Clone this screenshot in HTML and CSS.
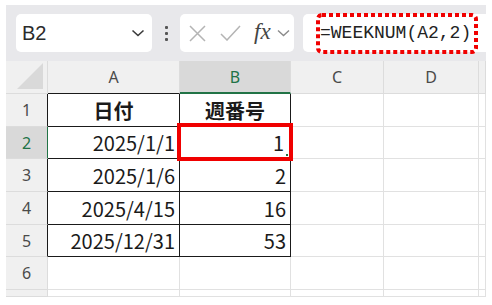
FILE: index.html
```html
<!DOCTYPE html>
<html lang="ja">
<head>
<meta charset="utf-8">
<link rel="stylesheet" href="styles.css">
</head>
<body>
<div class="frame">
  <div class="toolbar">
    <div class="namebox">
      <span class="ref">B2</span>
      <svg class="chev" width="14" height="8" viewBox="0 0 14 8"><path d="M1.5 1.5 L7 6.5 L12.5 1.5" fill="none" stroke="#3a3a3a" stroke-width="1.6"/></svg>
    </div>
    <div class="dots"><i></i><i></i><i></i></div>
    <div class="fbtns">
      <svg class="ic-x" width="17" height="17" viewBox="0 0 17 17"><path d="M1 1 L16 16 M16 1 L1 16" stroke="#b4b4b4" stroke-width="1.5" fill="none"/></svg>
      <svg class="ic-ok" width="21" height="16" viewBox="0 0 21 16"><path d="M1 9 L7 15 L20 1" stroke="#b4b4b4" stroke-width="1.5" fill="none"/></svg>
      <span class="fx">fx</span>
      <svg class="chev2" width="13" height="8" viewBox="0 0 13 8"><path d="M1 1.5 L6.5 6.5 L12 1.5" fill="none" stroke="#8a8a8a" stroke-width="1.4"/></svg>
    </div>
    <div class="formula">
      <span class="ftext">=WEEKNUM(A2,2)</span>
      <svg class="dotted" width="162" height="41" viewBox="0 0 162 41"><rect x="2" y="2" width="158" height="37" rx="4" fill="none" stroke="#f00000" stroke-width="4" stroke-dasharray="4 3"/></svg>
    </div>
  </div>
  <div class="sheet">
    <div class="c h corner"><svg width="27" height="27" viewBox="0 0 27 27"><path d="M26 0 L26 26 L0 26 Z" fill="#d9d9d9"/></svg></div>
    <div class="c h hA">A</div>
    <div class="c h hsel">B</div>
    <div class="c h">C</div>
    <div class="c h">D</div>
    <div class="c h"></div>

    <div class="c r rt">1</div>
    <div class="c t b">日付</div>
    <div class="c t b">週番号</div>
    <div class="c"></div>
    <div class="c"></div>
    <div class="c"></div>

    <div class="c r rsel">2</div>
    <div class="c t n">2025/1/1</div>
    <div class="c t n b2">1<span class="redbox"></span><span class="handle"></span></div>
    <div class="c"></div>
    <div class="c"></div>
    <div class="c"></div>

    <div class="c r rt">3</div>
    <div class="c t n">2025/1/6</div>
    <div class="c t n">2</div>
    <div class="c"></div>
    <div class="c"></div>
    <div class="c"></div>

    <div class="c r rt">4</div>
    <div class="c t n">2025/4/15</div>
    <div class="c t n">16</div>
    <div class="c"></div>
    <div class="c"></div>
    <div class="c"></div>

    <div class="c r rt">5</div>
    <div class="c t n">2025/12/31</div>
    <div class="c t n">53</div>
    <div class="c"></div>
    <div class="c"></div>
    <div class="c"></div>

    <div class="c r">6</div>
    <div class="c"></div>
    <div class="c"></div>
    <div class="c"></div>
    <div class="c"></div>
    <div class="c"></div>

    <div class="c r"></div>
    <div class="c"></div>
    <div class="c"></div>
    <div class="c"></div>
    <div class="c"></div>
    <div class="c"></div>
  </div>
</div>
</body>
</html>
```
FILE: styles.css
```css
* { box-sizing: border-box; }
html, body { margin: 0; padding: 0; background: #ffffff; }
body { width: 492px; height: 305px; overflow: hidden; }

.frame {
  margin: 5px 6px 0 6px;
  width: 480px;
}

.toolbar {
  height: 56px;
  background: #e8e8eb;
  display: flex;
  align-items: flex-start;
  padding: 9px 0 0 10px;
}

.namebox {
  width: 136px;
  height: 38px;
  background: #fff;
  border-radius: 5px;
  display: flex;
  align-items: center;
  justify-content: space-between;
  padding: 0 7px 0 6px;
}
.ref {
  font-family: "Liberation Sans", Arial, sans-serif;
  font-size: 20px;
  color: #2b2b2b;
}

.dots {
  width: 28px;
  height: 38px;
  display: flex;
  flex-direction: column;
  align-items: center;
  justify-content: center;
  gap: 3px;
}
.dots i {
  display: block;
  width: 3px;
  height: 3px;
  background: #555;
  border-radius: 1px;
}

.fbtns {
  width: 114px;
  height: 38px;
  background: #fff;
  border-radius: 5px;
  display: flex;
  align-items: center;
  padding-left: 9px;
}
.ic-x { margin-right: 14px; }
.ic-ok { margin-right: 13px; }
.fx {
  font-family: "Liberation Serif", "Times New Roman", serif;
  font-style: italic;
  font-size: 23px;
  color: #444;
  margin-right: 6px;
  line-height: 1;
  margin-top: -3px;
}

.formula {
  position: relative;
  flex: 1;
  height: 38px;
  margin-left: 9px;
  background: #fff;
  border-radius: 5px 0 0 5px;
  display: flex;
  align-items: center;
  padding-left: 17px;
}
.ftext {
  font-family: "Liberation Mono", "Courier New", monospace;
  font-size: 18px;
  color: #222;
}
.dotted {
  position: absolute;
  left: 13px;
  top: -1px;
}

.sheet {
  display: grid;
  grid-template-columns: 42px 132px 111px 93px 95px 7px;
  grid-template-rows: 33px 33px 32px 33px 33px 32px 33px 7px;
  font-family: "Noto Sans CJK JP", sans-serif;
}

.c {
  border-right: 1px solid #e1e1e1;
  border-bottom: 1px solid #e1e1e1;
  background: #fff;
  display: flex;
  align-items: center;
  position: relative;
}

.h, .r {
  background: #f0f0f0;
  border-color: #dcdcdc;
  justify-content: center;
  font-family: "Noto Sans", "Liberation Sans", sans-serif;
  font-size: 16px;
  color: #4a4a4a;
}
.corner { align-items: flex-end; justify-content: flex-end; padding: 0 3px 3px 0; }
.corner svg { display: block; }

.hA { border-bottom-color: #1a1a1a; }
.hsel {
  background: #d9d9d9;
  color: #217346;
  border-bottom: 2px solid #217346;
}

.rt { border-right-color: #1a1a1a; }
.rsel {
  background: #d9d9d9;
  color: #217346;
  border-right: 1px solid #217346;
}

.t {
  border-right-color: #1a1a1a;
  border-bottom-color: #1a1a1a;
  color: #1a1a1a;
  font-size: 20px;
}
.b {
  font-weight: bold;
  justify-content: center;
}
.n {
  justify-content: flex-end;
  padding-right: 4px;
}
.b2 { padding-right: 6px; z-index: 2; }

.redbox {
  position: absolute;
  left: -3px;
  top: -4px;
  right: -3px;
  bottom: -3px;
  border: 4px solid #f00000;
}
.handle {
  position: absolute;
  right: 2px;
  bottom: 2px;
  width: 2px;
  height: 2px;
  background: #217346;
}
```
